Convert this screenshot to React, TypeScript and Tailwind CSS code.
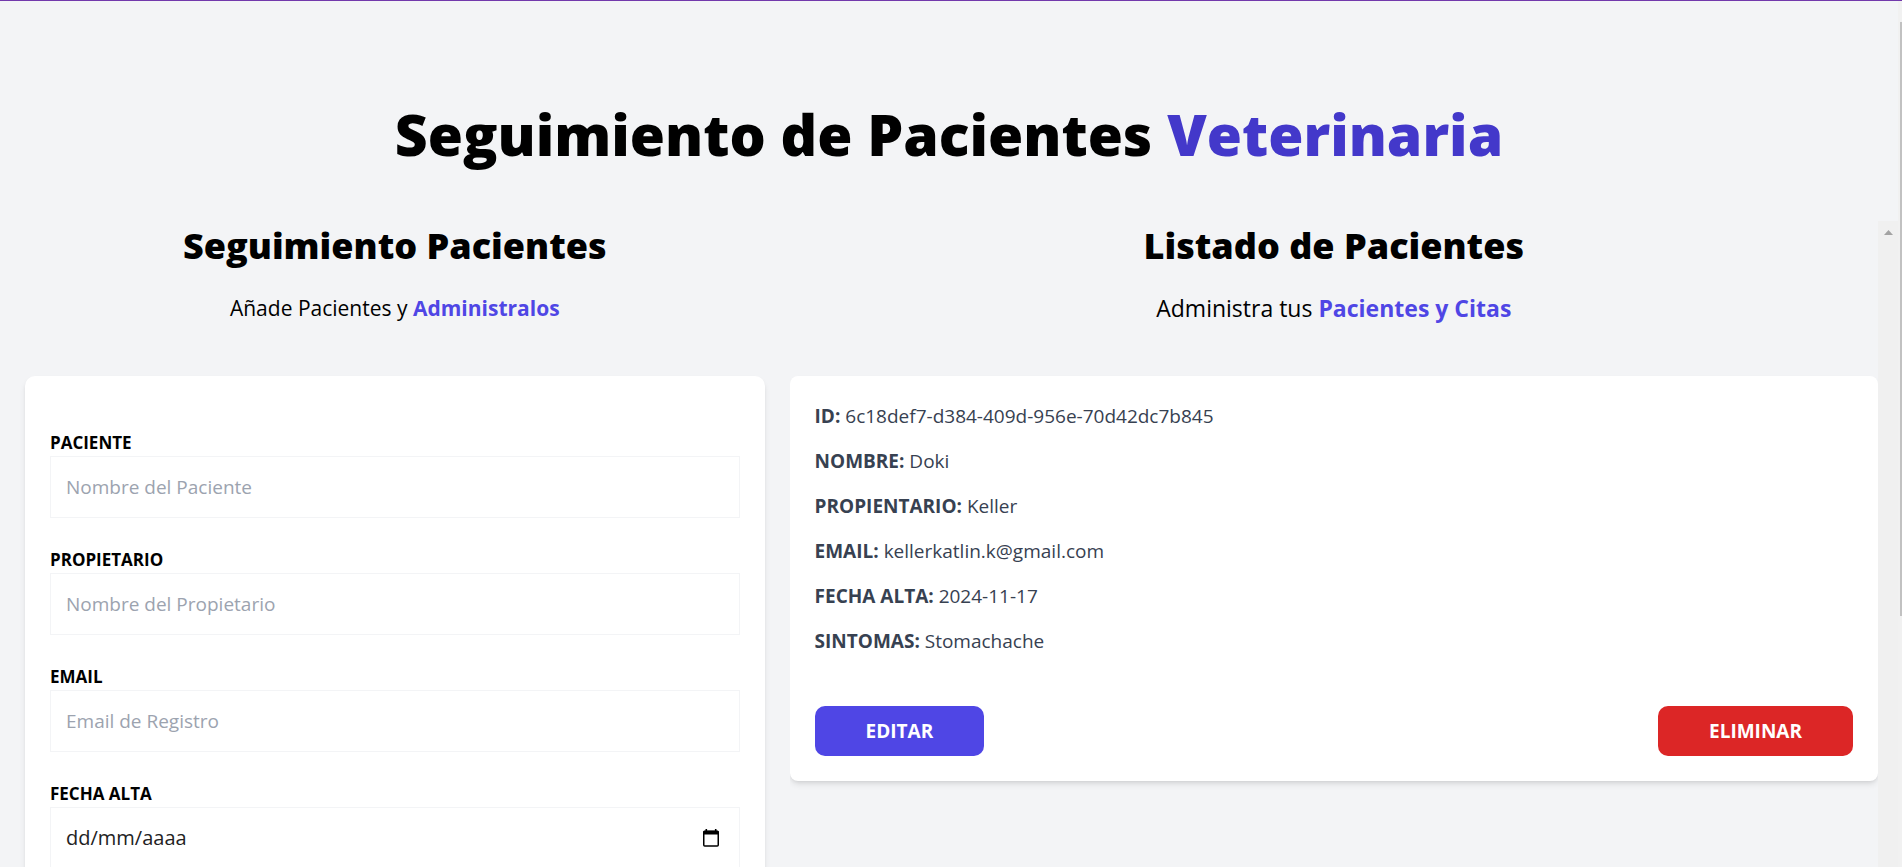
import type { ReactNode } from "react";

type Patient = {
  id: string;
  nombre: string;
  propietario: string;
  email: string;
  fecha: string;
  sintomas: string;
};

const patients: Patient[] = [
  {
    id: "6c18def7-d384-409d-956e-70d42dc7b845",
    nombre: "Doki",
    propietario: "Keller",
    email: "kellerkatlin.k@gmail.com",
    fecha: "2024-11-17",
    sintomas: "Stomachache",
  },
];

const fields = [
  { id: "paciente", label: "Paciente", type: "text", placeholder: "Nombre del Paciente" },
  { id: "propietario", label: "Propietario", type: "text", placeholder: "Nombre del Propietario" },
  { id: "email", label: "Email", type: "email", placeholder: "Email de Registro" },
];

function Header() {
  return (
    <header className="mt-[100px]">
      <h1 className="pt-1.5 text-center text-[57px] leading-[54px] font-extrabold text-black">
        Seguimiento de Pacientes <span className="text-[#4338ca]">Veterinaria</span>
      </h1>
    </header>
  );
}

function SectionTitle({ children }: { children: ReactNode }) {
  return (
    <h2 className="pt-1 text-center text-[36px] leading-[41px] font-extrabold text-black">{children}</h2>
  );
}

function FieldLabel({ htmlFor, children }: { htmlFor: string; children: ReactNode }) {
  return (
    <label htmlFor={htmlFor} className="block pt-1 text-[17px] leading-[26px] font-bold text-black uppercase">
      {children}
    </label>
  );
}

function CalendarIcon() {
  return (
    <svg width="16" height="18" viewBox="0 0 16 18" fill="none" aria-hidden="true">
      <path d="M3.3 0v3M12.7 0v3" stroke="#000" strokeWidth="1.6" />
      <path d="M0 3.2Q0 1.5 1.6 1.5H14.4Q16 1.5 16 3.2V5.4H0Z" fill="#000" />
      <rect x="0.75" y="2.5" width="14.5" height="14.5" rx="1" stroke="#000" strokeWidth="1.5" />
    </svg>
  );
}

function PatientForm() {
  return (
    <section className="w-[41.6%] px-[25px]">
      <SectionTitle>Seguimiento Pacientes</SectionTitle>
      <p className="mt-[25px] mb-[50px] text-center text-[21px] leading-[35px] text-black">
        Añade Pacientes y <span className="font-bold text-[#4f46e5]">Administralos</span>
      </p>
      <form className="rounded-[10px] bg-white px-[25px] py-[50px] shadow-md">
        {fields.map((field) => (
          <div key={field.id} className="mb-[25px]">
            <FieldLabel htmlFor={field.id}>{field.label}</FieldLabel>
            <input
              id={field.id}
              type={field.type}
              placeholder={field.placeholder}
              className="block w-full border border-gray-100 p-[15px] text-[19px] leading-[30px] placeholder:text-[#9ca3af]"
            />
          </div>
        ))}
        <div className="mb-[25px]">
          <FieldLabel htmlFor="alta">Fecha Alta</FieldLabel>
          <div className="flex items-center border border-gray-100 p-[15px]">
            <input
              id="alta"
              type="text"
              placeholder="dd/mm/aaaa"
              className="min-w-0 flex-1 text-[20px] leading-[30px] placeholder:text-[#222]"
            />
            <button type="button" aria-label="Elegir fecha" className="mr-[5px]">
              <CalendarIcon />
            </button>
          </div>
        </div>
      </form>
    </section>
  );
}

function Detail({ label, value }: { label: string; value: string }) {
  return (
    <p className="mb-[15px] text-[19px] leading-[30px] font-bold text-[#374151] uppercase">
      {label}: <span className="font-normal normal-case">{value}</span>
    </p>
  );
}

function PatientCard({ patient }: { patient: Patient }) {
  return (
    <article className="rounded-lg bg-white p-[25px] shadow-md">
      <Detail label="ID" value={patient.id} />
      <Detail label="Nombre" value={patient.nombre} />
      <Detail label="Propientario" value={patient.propietario} />
      <Detail label="Email" value={patient.email} />
      <Detail label="Fecha Alta" value={patient.fecha} />
      <Detail label="Sintomas" value={patient.sintomas} />
      <div className="mt-[50px] flex justify-between">
        <button
          type="button"
          className="rounded-[10px] bg-[#4f46e5] px-[51px] py-2.5 text-[19px] leading-[30px] font-bold text-white uppercase"
        >
          Editar
        </button>
        <button
          type="button"
          className="rounded-[10px] bg-[#dc2626] px-[51px] py-2.5 text-[19px] leading-[30px] font-bold text-white uppercase"
        >
          Eliminar
        </button>
      </div>
    </article>
  );
}

function PatientList() {
  return (
    <section className="flex h-screen min-w-0 flex-1">
      <div className="min-w-0 flex-1 overflow-x-clip">
        <SectionTitle>Listado de Pacientes</SectionTitle>
        <p className="mt-[25px] mb-[50px] text-center text-[23px] leading-[35px] text-black">
          Administra tus <span className="font-bold text-[#4f46e5]">Pacientes y Citas</span>
        </p>
        {patients.map((patient) => (
          <PatientCard key={patient.id} patient={patient} />
        ))}
      </div>
      <div className="flex w-5 justify-center bg-[#f0f0f0] pt-[9px]" aria-hidden="true">
        <svg width="9" height="5" viewBox="0 0 9 5">
          <path d="M4.5 0L9 5H0Z" fill="#a3a3a3" />
        </svg>
      </div>
    </section>
  );
}

export default function App() {
  return (
    <div className="flex h-screen flex-col overflow-hidden border-t border-[#7239ac] bg-[#f3f4f6] font-['Open_Sans','Noto_Sans',sans-serif]">
      <div className="flex min-h-0 flex-1">
        <div className="min-w-0 flex-1 overflow-hidden">
          <Header />
          <main className="mt-[60px] flex items-start">
            <PatientForm />
            <PatientList />
          </main>
        </div>
        <div className="w-1 bg-[#f1f1f1] pt-[21px] pl-0.5" aria-hidden="true">
          <div className="h-[594px] bg-[#c1c1c1]" />
        </div>
      </div>
    </div>
  );
}
